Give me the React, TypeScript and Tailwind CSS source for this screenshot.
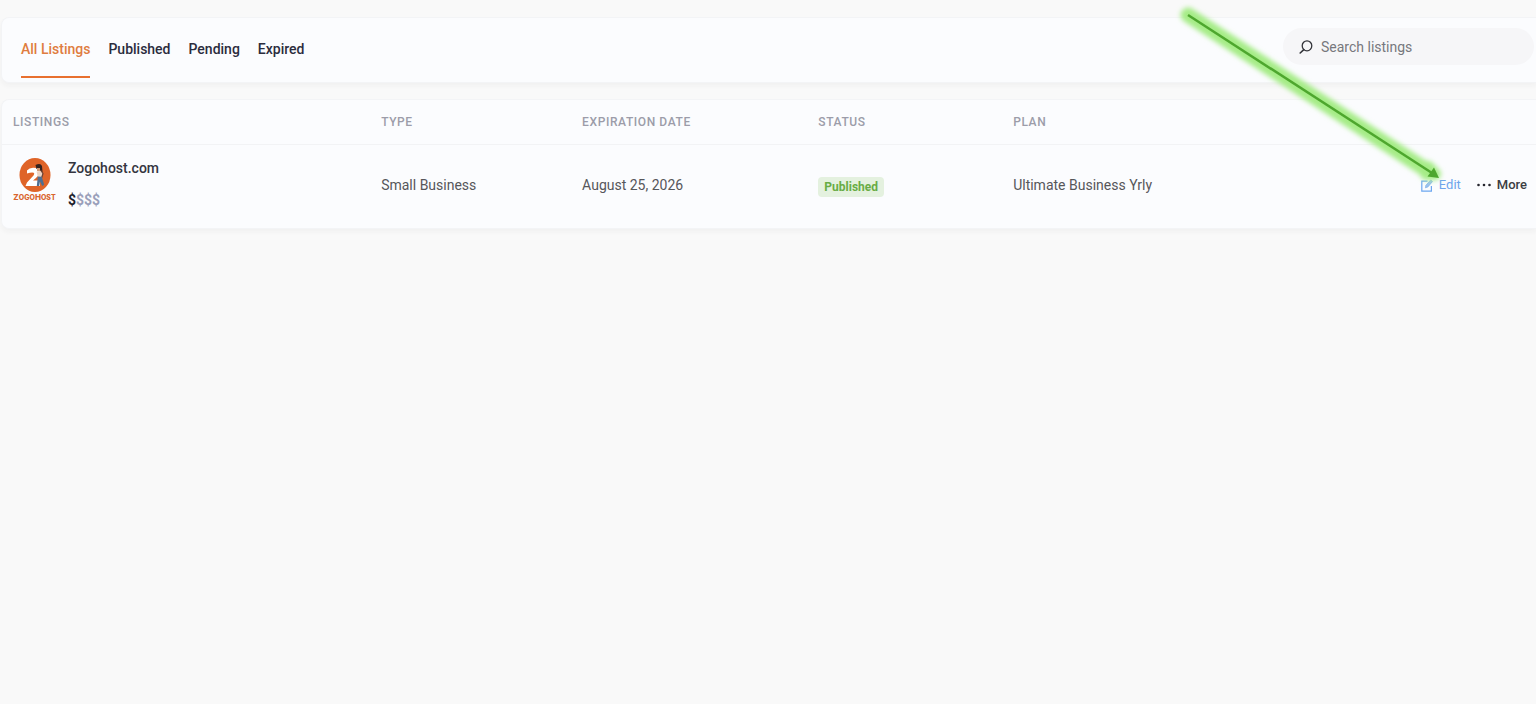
import clsx from "clsx"
import type { PropsWithChildren } from "react"

interface Listing {
  name: string
  type: string
  expires: string
  status: string
  plan: string
  priceLevel: number
}

const tabs = ["All Listings", "Published", "Pending", "Expired"]

const listings: Listing[] = [
  {
    name: "Zogohost.com",
    type: "Small Business",
    expires: "August 25, 2026",
    status: "Published",
    plan: "Ultimate Business Yrly",
    priceLevel: 1,
  },
]

const Card = ({ children }: PropsWithChildren) => (
  <section className="rounded-l-lg border border-r-0 border-[#f3f4f6] bg-[#fbfcfe] shadow-[0_3px_5px_rgba(40,40,60,0.04)]">
    {children}
  </section>
)

const SearchIcon = () => (
  <svg
    aria-hidden="true"
    viewBox="0 0 14 14"
    className="size-3.5 shrink-0"
    fill="none"
    stroke="#33343a"
    strokeLinecap="round"
  >
    <ellipse cx="8" cy="5.8" rx="4.8" ry="5" strokeWidth="1.3" />
    <path d="M4.8 9.6 1.2 13" strokeWidth="1.6" />
  </svg>
)

const EditIcon = () => (
  <svg
    aria-hidden="true"
    viewBox="0 0 12 13"
    className="h-[13px] w-3"
    fill="none"
    stroke="#6ca6f0"
  >
    <path d="M6.5 2.2H.8v10h9.6V7" strokeWidth="1.2" />
    <path
      d="m4.4 8.8.6-2.6L9.8.9l1.7 1.6L6.9 7.9Z"
      fill="#9cc4ee"
      stroke="#84b3ea"
      strokeWidth=".8"
    />
  </svg>
)

const MoreIcon = () => (
  <svg aria-hidden="true" viewBox="0 0 14 4" className="h-1 w-3.5" fill="#26262e">
    <circle cx="1.5" cy="2" r="1.3" />
    <circle cx="7" cy="2" r="1.3" />
    <circle cx="12.5" cy="2" r="1.3" />
  </svg>
)

const Logo = () => (
  <svg
    role="img"
    aria-label="ZogoHost"
    viewBox="0 0 43 43"
    className="size-[43px] shrink-0"
  >
    <ellipse cx="22" cy="17" rx="15.5" ry="17" fill="#df6428" />
    <path
      d="M14 12.5q2.5-3 6.500-2.800 6 .2 6 4.600 0 2.800-3.500 5.700L20 22.500h7V28H12.500l1.500-3.500 6.500-7q1.500-2 .2-2.800-2-.7-6.700.8Z"
      fill="#fff"
    />
    <path d="M22.500 7q5-2.500 6.500 1l.5 6-2-.8-.6-2.500-3.400.3Z" fill="#33221e" />
    <path d="M24 10h3v3h-3Z" fill="#cf9876" />
    <path d="m23.500 13.500 4-.8 2 2.500-1 4-3.500.5Z" fill="#ecd3c3" />
    <path d="m28 12.500 2 3-1.200 4" fill="none" stroke="#6c4539" strokeWidth="1.200" />
    <path d="m24.800 18.500 4 .3 2.400 8-2 1.200-2.200-4.500-.8 4.500h-2.400Z" fill="#4f6f91" />
    <text
      x="21.5"
      y="42"
      textAnchor="middle"
      fill="#d9652f"
      fontFamily="Inter, sans-serif"
      fontSize="8"
      fontWeight="800"
    >
      Z
      <tspan fontSize="7">OGO</tspan>H
      <tspan fontSize="7">OST</tspan>
    </text>
  </svg>
)

const PriceLevel = ({ level }: { level: number }) => (
  <div className="text-sm leading-5 font-bold text-[#9a9fba]">
    <span className="text-[#1d1d2b]">{"$".repeat(level)}</span>
    {"$".repeat(4 - level)}
  </div>
)

const Toolbar = () => (
  <div className="flex h-16 items-start justify-between pr-0.5 pl-[19px]">
    <nav aria-label="Listing status" className="flex gap-[18px] pt-1">
      {tabs.map((tab, i) => (
        <a
          key={tab}
          href="#"
          className={clsx(
            "flex h-14 items-center border-b-2 text-sm font-medium",
            i === 0
              ? "border-[#e8702f] text-[#df7c40]"
              : "border-transparent text-[#2b2c3d]",
          )}
        >
          {tab}
        </a>
      ))}
    </nav>
    <label className="mt-2.5 flex h-[37px] w-[251px] items-center gap-2 rounded-full bg-[#f6f6f8] px-4">
      <SearchIcon />
      <input
        type="search"
        aria-label="Search listings"
        placeholder="Search listings"
        className="w-full min-w-0 bg-transparent text-sm outline-none placeholder:text-[#77787d]"
      />
    </label>
  </div>
)

const ListingRow = ({ listing }: { listing: Listing }) => (
  <tr className="h-[84px] text-sm text-[#56565a]">
    <td className="px-[11px] pb-1">
      <div className="flex items-start gap-3">
        <Logo />
        <div className="flex flex-col gap-3">
          <a href="#" className="text-sm leading-5 font-medium text-[#34353f]">
            {listing.name}
          </a>
          <PriceLevel level={listing.priceLevel} />
        </div>
      </div>
    </td>
    <td className="px-[11px] pb-0.5">{listing.type}</td>
    <td className="px-[11px] pb-0.5">{listing.expires}</td>
    <td className="px-[11px]">
      <span className="inline-block rounded-sm bg-[#e4f1df] px-1.5 text-xs leading-5 font-bold text-[#68ac45]">
        {listing.status}
      </span>
    </td>
    <td className="px-[11px] pb-0.5">{listing.plan}</td>
    <td className="pr-[9px] pb-0.5">
      <div className="flex items-center justify-end gap-4 text-[13px]">
        <a href="#" className="flex items-center gap-1.5 text-[#6ea5ec]">
          <EditIcon />
          Edit
        </a>
        <button
          type="button"
          className="flex items-center gap-1.5 font-medium text-[#3c3c42]"
        >
          <MoreIcon />
          More
        </button>
      </div>
    </td>
  </tr>
)

const ListingsTable = () => (
  <table className="w-full table-fixed text-left">
    <thead>
      <tr className="h-11 border-b border-[#f2f3f5] text-xs tracking-wider text-[#9c9ca9] uppercase">
        <th className="w-[24%] px-[11px] font-medium">Listings</th>
        <th className="w-[13.1%] px-[11px] font-medium">Type</th>
        <th className="w-[15.4%] px-[11px] font-medium">Expiration date</th>
        <th className="w-[12.7%] px-[11px] font-medium">Status</th>
        <th className="px-[11px] font-medium">Plan</th>
        <th className="w-40" aria-label="Actions" />
      </tr>
    </thead>
    <tbody>
      {listings.map((listing) => (
        <ListingRow key={listing.name} listing={listing} />
      ))}
    </tbody>
  </table>
)

const PointerArrow = () => (
  <svg
    aria-hidden="true"
    viewBox="0 0 286 200"
    className="pointer-events-none absolute top-0 right-[76px] h-[200px] w-[286px]"
  >
    <defs>
      <filter id="glow" x="-20%" y="-20%" width="140%" height="140%">
        <feGaussianBlur stdDeviation="2.5" />
      </filter>
    </defs>
    <g filter="url(#glow)" stroke="#a5ec86" strokeLinecap="round">
      <path d="m14 15 243 158" strokeWidth="15" />
      <path d="m254 167 7 7-9 0Z" strokeWidth="12" strokeLinejoin="round" />
    </g>
    <path d="m14 15 244 158" stroke="#4ea72e" strokeWidth="2.5" />
    <path d="m265 178-11.500-1.500 6.500-9Z" fill="#4ea72e" />
  </svg>
)

export default function App() {
  return (
    <main className="relative min-h-screen overflow-x-hidden bg-[#f9f9f9] pt-[17px] pl-px font-[Roboto,sans-serif]">
      <div className="flex flex-col gap-4">
        <Card>
          <Toolbar />
        </Card>
        <Card>
          <ListingsTable />
        </Card>
      </div>
      <PointerArrow />
    </main>
  )
}
